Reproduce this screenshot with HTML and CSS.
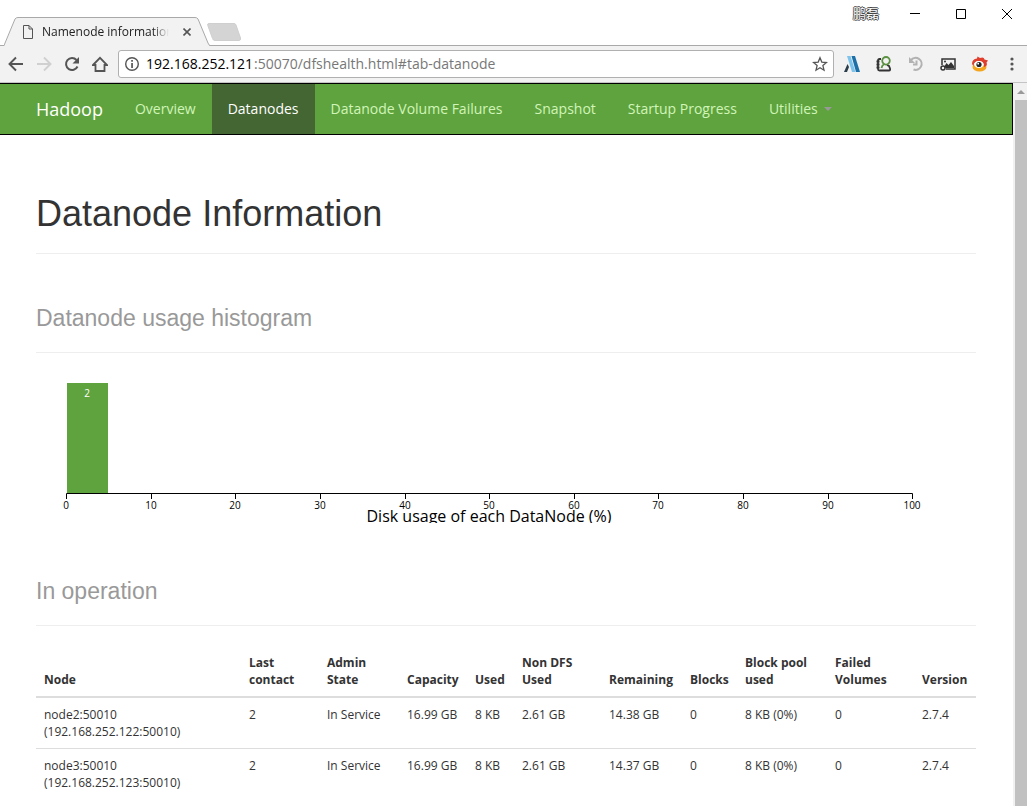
FILE: index.html
```html
<!DOCTYPE html>
<html lang="en">

<head>
    <meta charset="UTF-8">
    <meta name="viewport" content="width=device-width, initial-scale=1.0">
    <title>Namenode information</title>
    <link rel="stylesheet" href="styles.css">
</head>

<body>
    <!-- Title bar: tab on the left, window buttons on the right -->
    <div class="titlebar">
        <div class="tab">
            <svg class="tab-shape" width="206" height="29" viewBox="0 0 206 29">
                <path d="M0 29 L11 2 Q12 .5 14 .5 H191 Q193 .5 194 2 L204 26 Q205 28.500 206 29Z" fill="#f2f2f2" />
                <path d="M0 28.500 L11 2 Q12 .5 14 .5 H191 Q193 .5 194 2 L204 26 Q205 28.500 206 28.500" fill="none" stroke="#a9a9a9" />
            </svg>
            <svg class="tab-file" width="10" height="14" viewBox="0 0 10 14" fill="none" stroke="#555">
                <path d="M.5.5h5.500l3.500 3.500v9.500h-9zM6 .5V4h3.500" />
            </svg>
            <span class="tab-title">Namenode information</span>
            <button class="tab-close" aria-label="Close tab">
                <svg width="8" height="8" viewBox="0 0 8 8" stroke="#555" stroke-width="1.6">
                    <path d="M.5.5l7 7M7.500.5l-7 7" />
                </svg>
            </button>
        </div>
        <button class="new-tab" aria-label="New tab">
            <svg width="35" height="18" viewBox="0 0 35 18">
                <path d="M2 .5H27Q28.500 .5 29 2L33.500 15Q34 17.500 32 17.500H8Q6 17.500 5.500 15.500L.8 2.500Q0 .5 2 .5Z" fill="#d4d4d4" stroke="#cfcfcf" />
            </svg>
        </button>
        <div class="window-buttons">
            <span class="profile">鹏磊</span>
            <button aria-label="Minimize">
                <svg width="12" height="12" viewBox="0 0 12 12"><path d="M1 5.500h10" stroke="#000" /></svg>
            </button>
            <button aria-label="Maximize">
                <svg width="12" height="12" viewBox="0 0 12 12"><path d="M1.500 1.500h9v9h-9z" fill="none" stroke="#000" /></svg>
            </button>
            <button aria-label="Close">
                <svg width="12" height="12" viewBox="0 0 12 12"><path d="M1 1l10 10M11 1L1 11" stroke="#000" /></svg>
            </button>
        </div>
    </div>

    <!-- Toolbar -->
    <div class="toolbar">
        <button aria-label="Back">
            <svg width="16" height="16" viewBox="0 0 16 16" fill="none" stroke="#555" stroke-width="1.900">
                <path d="M15 8H2M8 1.500L1.500 8L8 14.500" />
            </svg>
        </button>
        <button aria-label="Forward">
            <svg width="16" height="16" viewBox="0 0 16 16" fill="none" stroke="#d0d0d0" stroke-width="1.900">
                <path d="M1 8h13M8 1.500L14.500 8L8 14.500" />
            </svg>
        </button>
        <button aria-label="Reload">
            <svg width="16" height="16" viewBox="0 0 16 16" fill="none" stroke="#555" stroke-width="2">
                <path d="M13.500 10.500A6 6 0 1 1 12.500 4" />
                <path d="M15 1v6.500H8.500z" fill="#555" stroke="none" />
            </svg>
        </button>
        <button aria-label="Home">
            <svg width="16" height="16" viewBox="0 0 16 16" fill="none" stroke="#555" stroke-width="1.800">
                <path d="M1 9L8 1.800L15 9H12.500V15H3.500V9H1z" />
            </svg>
        </button>
        <label class="omnibox">
            <svg width="16" height="16" viewBox="0 0 16 16">
                <circle cx="8" cy="8" r="6.300" fill="none" stroke="#555" stroke-width="1.400" />
                <path d="M7.200 4h1.700v1.700H7.200zM7.200 6.900h1.700V12H7.200z" fill="#555" />
            </svg>
            <input class="host" type="text" value="192.168.252.121" aria-label="Address">
            <span class="path">:50070/dfshealth.html#tab-datanode</span>
            <svg width="16" height="16" viewBox="0 0 16 16" fill="none" stroke="#555" stroke-width="1.300">
                <path d="M8 1.800l1.800 4.300 4.700.4-3.600 3.100 1.100 4.600L8 11.700l-4 2.500 1.100-4.600L1.500 6.500l4.700-.4z" />
            </svg>
        </label>
        <div class="extensions">
            <button aria-label="Translate">
                <svg width="16" height="16" viewBox="0 0 16 16">
                    <path d="M3 0h3.500l5 16H8z" fill="#7cc4ec" />
                    <path d="M7.500 0H11l5 16h-4z" fill="#1d6fa8" />
                    <path d="M3.500 8l1.500 3-2 5H0z" fill="#2b3c4b" />
                </svg>
            </button>
            <button aria-label="Accounts">
                <svg width="16" height="16" viewBox="0 0 16 16" fill="none">
                    <path d="M5 3H3.500Q2 3 2 4.500V13Q2 14.500 3.500 14.500H13Q14.500 14.500 14 12.500L13 10L11 9M.5 5.500h3M.5 8.500h3M.5 11.500h3" stroke="#333" stroke-width="1.800" />
                    <circle cx="10" cy="4.800" r="3.800" stroke="#5b9140" stroke-width="1.800" />
                    <path d="M8.500 8Q6 9 5.500 12" stroke="#5b9140" stroke-width="1.800" />
                </svg>
            </button>
            <button aria-label="History">
                <svg width="16" height="16" viewBox="0 0 16 16" fill="none" stroke="#b2b2b2" stroke-width="2">
                    <path d="M3 4A6 6 0 1 1 5.500 13.500M8.500 4.500V8.500H5" />
                    <path d="M1 1v6h6z" fill="#b2b2b2" stroke="none" />
                </svg>
            </button>
            <button aria-label="Pictures">
                <svg width="16" height="16" viewBox="0 0 16 16" fill="none">
                    <path d="M2 9V3h13v10H6" stroke="#333" stroke-width="1.500" />
                    <path d="M4 11l2.500-4 2 2L11 6l3 4v2H6z" fill="#333" />
                    <circle cx="5" cy="5.500" r="1" fill="#333" />
                    <circle cx="3" cy="12" r="2" stroke="#333" stroke-width="1.500" />
                </svg>
            </button>
            <button aria-label="Weibo">
                <svg width="16" height="16" viewBox="0 0 16 16">
                    <ellipse cx="7.500" cy="11" rx="7" ry="4.500" fill="#f3a51d" />
                    <path d="M0 8Q0 3 5 2.500L5.500.5 8 2q4-1.500 4.500 1.500L16 4.500l-1.500 2Q16 10 12 11Q12 5 7 5Q2 5 1.500 10z" fill="#df3f2c" />
                    <ellipse cx="7" cy="8.500" rx="4.800" ry="3.500" fill="#fff" />
                    <circle cx="7" cy="8.500" r="2.600" fill="#222" />
                    <circle cx="6.200" cy="7.700" r=".9" fill="#fff" />
                </svg>
            </button>
            <button aria-label="Menu">
                <svg width="16" height="16" viewBox="0 0 16 16" fill="#555">
                    <circle cx="8" cy="3" r="1.600" />
                    <circle cx="8" cy="8" r="1.600" />
                    <circle cx="8" cy="13" r="1.600" />
                </svg>
            </button>
        </div>
    </div>

    <div class="viewport">
        <div class="page">
            <nav class="navbar">
                <a class="brand" href="#">Hadoop</a>
                <a href="#tab-overview">Overview</a>
                <a class="active" href="#tab-datanode">Datanodes</a>
                <a href="#tab-datanode-volume-failures">Datanode Volume Failures</a>
                <a href="#tab-snapshot">Snapshot</a>
                <a href="#tab-startup-progress">Startup Progress</a>
                <a href="#tab-utilities">Utilities <span class="caret"></span></a>
            </nav>

            <main class="container">
                <div class="page-header">
                    <h1>Datanode Information</h1>
                </div>

                <div class="page-header">
                    <h2>Datanode usage histogram</h2>
                </div>
                <svg class="histogram" role="img" aria-label="Datanode usage histogram">
                    <rect x="31" y="10" width="41" height="110" fill="#5fa33e" />
                    <text class="count" x="51" y="24">2</text>
                    <path d="M30.500 126V120.500H876.500V126M115.500 120v6M199.500 120v6M284.500 120v6M369.500 120v6M453.500 120v6M538.500 120v6M622.500 120v6M707.500 120v6M792.500 120v6" />
                    <text x="30" y="136">0</text>
                    <text x="115" y="136">10</text>
                    <text x="199" y="136">20</text>
                    <text x="284" y="136">30</text>
                    <text x="369" y="136">40</text>
                    <text x="453" y="136">50</text>
                    <text x="538" y="136">60</text>
                    <text x="622" y="136">70</text>
                    <text x="707" y="136">80</text>
                    <text x="792" y="136">90</text>
                    <text x="876" y="136">100</text>
                    <text class="axis-label" x="453" y="149">Disk usage of each DataNode (%)</text>
                </svg>

                <div class="page-header">
                    <h2>In operation</h2>
                </div>
                <table class="table">
                    <colgroup>
                        <col class="col-node">
                        <col class="col-contact">
                        <col class="col-state">
                        <col class="col-capacity">
                        <col class="col-used">
                        <col class="col-nondfs">
                        <col class="col-remaining">
                        <col class="col-blocks">
                        <col class="col-pool">
                        <col class="col-failed">
                        <col class="col-version">
                    </colgroup>
                    <thead>
                        <tr>
                            <th>Node</th>
                            <th>Last<br>contact</th>
                            <th>Admin<br>State</th>
                            <th>Capacity</th>
                            <th>Used</th>
                            <th>Non DFS<br>Used</th>
                            <th>Remaining</th>
                            <th>Blocks</th>
                            <th>Block pool<br>used</th>
                            <th>Failed<br>Volumes</th>
                            <th>Version</th>
                        </tr>
                    </thead>
                    <tbody>
                        <tr>
                            <td>node2:50010<br>(192.168.252.122:50010)</td>
                            <td>2</td>
                            <td>In Service</td>
                            <td>16.99 GB</td>
                            <td>8 KB</td>
                            <td>2.61 GB</td>
                            <td>14.38 GB</td>
                            <td>0</td>
                            <td>8 KB (0%)</td>
                            <td>0</td>
                            <td>2.7.4</td>
                        </tr>
                        <tr>
                            <td>node3:50010<br>(192.168.252.123:50010)</td>
                            <td>2</td>
                            <td>In Service</td>
                            <td>16.99 GB</td>
                            <td>8 KB</td>
                            <td>2.61 GB</td>
                            <td>14.37 GB</td>
                            <td>0</td>
                            <td>8 KB (0%)</td>
                            <td>0</td>
                            <td>2.7.4</td>
                        </tr>
                    </tbody>
                </table>
            </main>
        </div>
        <div class="scrollbar">
            <div class="scroll-up"></div>
            <div class="scroll-thumb"></div>
        </div>
    </div>
</body>

</html>
```

FILE: styles.css
```css
* {
    margin: 0;
    padding: 0;
    box-sizing: border-box;
}

body {
    display: flex;
    flex-direction: column;
    height: 100vh;
    overflow: hidden;
    background-color: #fff;
    color: #333;
    font-family: "Open Sans", "Noto Sans CJK SC", sans-serif;
    font-size: 12px;
    line-height: 17px;
}

button {
    display: flex;
    border: none;
    background: none;
}

svg {
    display: block;
    flex: none;
}

/* Title bar */
.titlebar {
    display: flex;
    align-items: flex-end;
    flex: none;
    height: 46px;
    padding-left: 4px;
    border-bottom: 1px solid #a9a9a9;
}

.tab {
    position: relative;
    display: flex;
    align-items: center;
    width: 206px;
    height: 29px;
    margin-bottom: -1px;
    padding: 0 19px;
}

.tab-shape {
    position: absolute;
    top: 0;
    left: 0;
}

.tab-file,
.tab-title,
.tab-close {
    position: relative;
}

/* Long titles fade out before the close button */
.tab-title {
    flex: 1;
    margin: 0 10px 0 9px;
    overflow: hidden;
    white-space: nowrap;
    color: #222;
    -webkit-mask-image: linear-gradient(to left, transparent 4px, #000 20px);
    mask-image: linear-gradient(to left, transparent 4px, #000 20px);
}

.new-tab {
    margin: 0 0 4px -3px;
}

.window-buttons {
    display: flex;
    align-items: center;
    align-self: flex-start;
    gap: 34px;
    height: 27px;
    margin-left: auto;
    padding-right: 14px;
}

.profile {
    margin-right: -4px;
    color: #fff;
    font-size: 13px;
    text-shadow: 1px 0 #444, -1px 0 #444, 0 1px #444, 0 -1px #444;
}

/* Toolbar */
.toolbar {
    display: flex;
    align-items: center;
    flex: none;
    gap: 12px;
    height: 37px;
    padding: 0 7px 0 8px;
    background-color: #f2f2f2;
    border-bottom: 1px solid #c4c4c4;
}

.omnibox {
    display: flex;
    align-items: center;
    flex: 1;
    height: 28px;
    margin: 0 -2px;
    padding: 0 5px;
    background-color: #fff;
    border: 1px solid #b0b0b0;
    border-radius: 3px;
    font-size: 14px;
    line-height: 20px;
}

.host {
    width: 108px;
    margin-left: 6px;
    border: none;
    outline: none;
    background: none;
    color: #000;
    font: inherit;
    field-sizing: content;
}

.path {
    flex: 1;
    color: #777;
}

.extensions {
    display: flex;
    gap: 16px;
}

/* Page area and its scrollbar */
.viewport {
    display: flex;
    flex: 1;
    min-height: 0;
}

.page {
    flex: 1;
    overflow: hidden;
}

.scrollbar {
    display: flex;
    flex-direction: column;
    width: 14px;
    padding-left: 2px;
    background-color: #f1f1f1;
}

.scroll-up {
    display: flex;
    justify-content: center;
    align-items: center;
    height: 17px;
}

.scroll-up::before {
    content: "";
    border: 4px solid transparent;
    border-top: none;
    border-bottom-color: #999;
}

.scroll-thumb {
    flex: 1;
    background-color: #c1c1c1;
}

.navbar {
    display: flex;
    height: 52px;
    padding-left: 20px;
    background-color: #5fa33e;
    border: 1px solid #000;
    border-left: none;
}

.navbar a {
    display: flex;
    align-items: center;
    padding: 0 16px;
    color: #d1f5b9;
    font-size: 14px;
    line-height: 20px;
    text-decoration: none;
    white-space: nowrap;
}

.navbar .brand {
    color: #fff;
    font-size: 18px;
}

.navbar .active {
    background-color: #446633;
    color: #fff;
}

.caret {
    margin-left: 6px;
    border: 4px solid transparent;
    border-top-color: #999;
    border-bottom: none;
}

.container {
    padding: 18px 37px 0 36px;
}

.page-header {
    margin: 40px 0 20px;
    padding-bottom: 18px;
    border-bottom: 1px solid #eee;
}

h1,
h2 {
    font-family: "Liberation Sans", Arial, sans-serif;
    font-weight: normal;
}

h1 {
    font-size: 36px;
    line-height: 42px;
}

h2 {
    padding: 10px 0 2px;
    color: #999;
    font-size: 23px;
    line-height: 28px;
}

/* Histogram */
.histogram {
    width: 100%;
    height: 150px;
    margin-bottom: 44px;
    overflow: hidden;
}

.histogram path {
    fill: none;
    stroke: #000;
}

.histogram text {
    fill: #000;
    font-size: 10px;
    text-anchor: middle;
}

.histogram .count {
    fill: #fff;
}

.histogram .axis-label {
    font-size: 16px;
}

/* Datanode table */
.table {
    width: 100%;
    table-layout: fixed;
    border-collapse: collapse;
}

.table th,
.table td {
    padding: 8px 0 8px 8px;
    text-align: left;
    vertical-align: top;
    white-space: nowrap;
}

.table th {
    vertical-align: bottom;
    border-bottom: 2px solid #ddd;
}

.table tr + tr td {
    border-top: 1px solid #ddd;
}

.col-node {
    width: 205px;
}

.col-contact {
    width: 78px;
}

.col-state {
    width: 80px;
}

.col-capacity {
    width: 68px;
}

.col-used {
    width: 47px;
}

.col-nondfs {
    width: 87px;
}

.col-remaining {
    width: 81px;
}

.col-blocks {
    width: 55px;
}

.col-pool {
    width: 90px;
}

.col-failed {
    width: 87px;
}

.col-version {
    width: 62px;
}
```
